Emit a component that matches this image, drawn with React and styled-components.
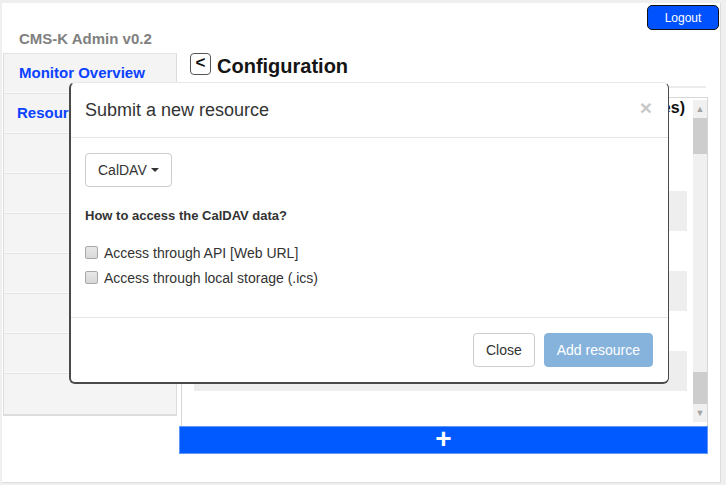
import React from 'react'
import styled, { createGlobalStyle } from 'styled-components'

const GlobalStyle = createGlobalStyle`
    html, body {
        margin: 0;
        padding: 0;
        background: #efefef;
        font-family: "Liberation Sans", Arial, sans-serif;
        overflow: hidden;
    }
    * { box-sizing: border-box; }
`

const menuItems = ['Monitor Overview', 'Resources', '', '', '', '', '', '', '']

function App() {
    return (
        <>
            <GlobalStyle />
            <Frame>
                <Header>
                    <Brand>CMS-K Admin v0.2</Brand>
                    <LogoutButton>Logout</LogoutButton>
                </Header>
                <Body>
                    <Sidebar>
                        {menuItems.map((label, i) => (
                            <MenuItem key={i} $indent={i === 0 ? 15 : 13}>{label}</MenuItem>
                        ))}
                    </Sidebar>
                    <Main>
                        <TitleRow>
                            <BackButton>&lt;</BackButton>
                            <PageTitle>Configuration</PageTitle>
                        </TitleRow>
                        <Hr />
                        <Panel>
                            <PanelContent>
                                <PanelHeading>Configured resources (0 resources)</PanelHeading>
                                <ResourceRow />
                                <ResourceRow />
                                <ResourceRow />
                            </PanelContent>
                            <Scrollbar>
                                <ScrollArrow>▲</ScrollArrow>
                                <Thumb $h={36} />
                                <Track />
                                <Thumb $h={32} />
                                <ScrollArrow>▼</ScrollArrow>
                            </Scrollbar>
                        </Panel>
                        <AddBar>+</AddBar>
                    </Main>
                </Body>

                <Modal>
                    <ModalHeader>
                        <ModalTitle>Submit a new resource</ModalTitle>
                        <CloseX>×</CloseX>
                    </ModalHeader>
                    <ModalBody>
                        <Dropdown>
                            CalDAV <Caret />
                        </Dropdown>
                        <Question>How to access the CalDAV data?</Question>
                        <CheckRow>
                            <CheckBox type="checkbox" />
                            Access through API [Web URL]
                        </CheckRow>
                        <CheckRow>
                            <CheckBox type="checkbox" />
                            Access through local storage (.ics)
                        </CheckRow>
                    </ModalBody>
                    <ModalFooter>
                        <Button>Close</Button>
                        <Button $primary>Add resource</Button>
                    </ModalFooter>
                </Modal>
            </Frame>
        </>
    )
}

export default App

const Frame = styled.div`
    position: relative;
    margin: 3px 0 0 2px;
    width: 719px;
    height: 480px;
    background: #fff;
    border-right: 1px solid #dedede;
    border-bottom: 1px solid #dedede;
`

const Header = styled.div`
    display: flex;
    justify-content: space-between;
    align-items: flex-start;
    height: 50px;
    padding: 2px 1px 0 17px;
`

const Brand = styled.div`
    margin-top: 25px;
    font-size: 15px;
    font-weight: bold;
    color: #808080;
`

const LogoutButton = styled.button`
    width: 72px;
    height: 25px;
    background: #0052ff;
    border: 1px solid #111;
    border-radius: 5px;
    color: #fff;
    font-family: "Liberation Sans", Arial, sans-serif;
    font-size: 12px;
    padding: 0;
`

const Body = styled.div`
    display: flex;
    align-items: flex-start;
`

const Sidebar = styled.div`
    width: 174px;
    margin-left: 1px;
    background: #f4f4f4;
    border: 1px solid #dcdcdc;
    border-top: 1px solid #e4e4e4;
    border-bottom-width: 2px;
`

const MenuItem = styled.div`
    height: 40px;
    display: flex;
    align-items: center;
    padding-left: ${({ $indent }) => $indent}px;
    padding-bottom: 3px;
    border-bottom: 1px solid #e4e4e4;
    box-shadow: inset 0 -1px 0 #fbfbfb;
    font-size: 15px;
    font-weight: bold;
    color: #0a42ff;
    &:last-child { border-bottom: none; box-shadow: none; }
`

const Main = styled.div`
    width: 529px;
    margin-left: 2px;
`

const TitleRow = styled.div`
    display: flex;
    align-items: flex-start;
    gap: 6px;
    height: 22px;
    padding-left: 11px;
`

const BackButton = styled.div`
    width: 21px;
    height: 22px;
    display: flex;
    align-items: center;
    justify-content: center;
    border: 1.5px solid #555;
    border-radius: 4px;
    font-size: 17px;
    font-weight: bold;
    color: #111;
    padding-bottom: 2px;
`

const PageTitle = styled.h1`
    margin: 2px 0 0;
    font-size: 20px;
    font-weight: bold;
    color: #151515;
`

const Hr = styled.div`
    margin: 11px 2px 0 11px;
    height: 2px;
    background: #ececec;
`

const Panel = styled.div`
    display: flex;
    height: 329px;
    margin: 9px 0 0 2px;
    border: 1px solid #d6d6d6;
    border-bottom: none;
`

const PanelContent = styled.div`
    flex: 1;
    padding: 0 6px 0 12px;
    overflow: hidden;
`

const PanelHeading = styled.div`
    height: 93px;
    padding-top: 1px;
    text-align: right;
    padding-right: 2px;
    font-size: 16px;
    font-weight: bold;
    color: #111;
    white-space: nowrap;
`

const ResourceRow = styled.div`
    height: 40px;
    margin-bottom: 40px;
    background: #eeeeee;
`

const Scrollbar = styled.div`
    width: 14px;
    margin: 2px 0 4px;
    display: flex;
    flex-direction: column;
    background: #f0f0f0;
`

const ScrollArrow = styled.div`
    height: 18px;
    display: flex;
    align-items: center;
    justify-content: center;
    font-size: 9px;
    color: #a3a3a3;
`

const Thumb = styled.div`
    height: ${({ $h }) => $h}px;
    background: #cdcdcd;
`

const Track = styled.div`
    flex: 1;
`

const AddBar = styled.div`
    height: 28px;
    display: flex;
    align-items: center;
    justify-content: center;
    background: #005aff;
    border: 1px solid #5f95f5;
    color: #fff;
    font-size: 28px;
    font-weight: bold;
    line-height: 1;
    padding-bottom: 2px;
`

const Modal = styled.div`
    position: absolute;
    left: 67px;
    top: 79px;
    width: 600px;
    background: #fff;
    border-left: 2px solid #4a4a4a;
    border-right: 1px solid #4a4a4a;
    border-bottom: 2px solid #4a4a4a;
    border-top: 1px solid #e8e8e8;
    border-radius: 6px;
`

const ModalHeader = styled.div`
    display: flex;
    justify-content: space-between;
    align-items: center;
    height: 55px;
    padding: 0 16px 0 14px;
    border-bottom: 1px solid #e5e5e5;
`

const ModalTitle = styled.h4`
    margin: 0;
    font-size: 18px;
    font-weight: normal;
    color: #333;
`

const CloseX = styled.span`
    font-size: 21px;
    font-weight: bold;
    color: #c8c8c8;
    margin-top: -5px;
`

const ModalBody = styled.div`
    padding: 15px 14px 27px;
`

const Dropdown = styled.div`
    display: inline-flex;
    align-items: center;
    gap: 4px;
    height: 34px;
    padding: 0 12px;
    border: 1px solid #cccccc;
    border-radius: 4px;
    font-size: 14px;
    color: #333;
`

const Caret = styled.span`
    width: 0;
    height: 0;
    border-left: 4px solid transparent;
    border-right: 4px solid transparent;
    border-top: 4px solid #333;
`

const Question = styled.div`
    margin: 21px 0 17px;
    font-size: 13px;
    font-weight: bold;
    color: #333;
`

const CheckRow = styled.label`
    display: flex;
    align-items: center;
    gap: 6px;
    height: 25px;
    font-size: 14px;
    color: #333;
`

const CheckBox = styled.input`
    appearance: none;
    margin: 0;
    width: 13px;
    height: 13px;
    border: 1px solid #a8a8a8;
    border-radius: 2px;
    background: linear-gradient(#e8e8e8, #d8d8d8);
`

const ModalFooter = styled.div`
    display: flex;
    justify-content: flex-end;
    gap: 9px;
    padding: 15px 15px 15px;
    border-top: 1px solid #e5e5e5;
`

const Button = styled.button`
    height: 34px;
    padding: 0 12px;
    border-radius: 4px;
    font-family: "Liberation Sans", Arial, sans-serif;
    font-size: 14px;
    border: 1px solid ${({ $primary }) => ($primary ? '#86b3dc' : '#cccccc')};
    background: ${({ $primary }) => ($primary ? '#86b3dc' : '#fff')};
    color: ${({ $primary }) => ($primary ? '#fff' : '#333')};
`
